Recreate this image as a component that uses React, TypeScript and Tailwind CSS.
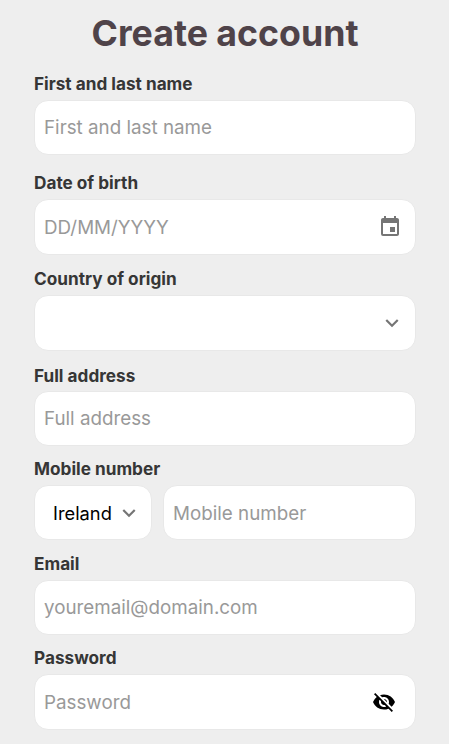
import React from 'react';
import { MdEvent, MdExpandMore, MdVisibilityOff } from 'react-icons/md';

const box = 'flex items-center bg-white rounded-[14px] border border-[#e8e8e8]';
const inputCls =
  'w-full min-w-0 bg-transparent outline-none pt-[2px] text-[18.8px] text-[#333] placeholder:text-[#999]';

function Label({ text }: { text: string }) {
  return <label className="block text-[17.2px] leading-[20px] font-bold text-[#363636]">{text}</label>;
}

export default function App() {
  return (
    <div className="w-[449px] h-[744px] overflow-hidden bg-[#eeeeee] pl-[34px] pr-[33px] font-['Inter',sans-serif]">
      <h1 className="pt-[12px] text-center text-[35.7px] leading-[42px] font-bold text-[#4f4349]">Create account</h1>

      <div className="mt-[20px]">
        <Label text="First and last name" />
        <div className={`${box} mt-[6px] h-[55px] pl-[9px] pr-[10px]`}>
          <input className={inputCls} placeholder="First and last name" />
        </div>
      </div>

      <div className="mt-[18px]">
        <Label text="Date of birth" />
        <div className={`${box} mt-[6px] h-[56px] pl-[9px] pr-[13px]`}>
          <input className={inputCls} placeholder="DD/MM/YYYY" />
          <MdEvent className="shrink-0 text-[#757575]" size={24} />
        </div>
      </div>

      <div className="mt-[14px]">
        <Label text="Country of origin" />
        <div className={`${box} mt-[6px] h-[56px] justify-end pr-[10px]`}>
          <MdExpandMore className="shrink-0 text-[#757575]" size={26} />
        </div>
      </div>

      <div className="mt-[15px]">
        <Label text="Full address" />
        <div className={`${box} mt-[5px] h-[55px] pl-[9px] pr-[10px]`}>
          <input className={inputCls} placeholder="Full address" />
        </div>
      </div>

      <div className="mt-[13px]">
        <Label text="Mobile number" />
        <div className="mt-[6px] flex gap-[11px]">
          <div className={`${box} h-[55px] w-[118px] shrink-0 pl-[18px] pr-[9px] justify-between`}>
            <span className="pt-[2px] text-[18.3px] text-black">Ireland</span>
            <MdExpandMore className="shrink-0 text-[#757575]" size={26} />
          </div>
          <div className={`${box} h-[55px] flex-1 min-w-0 pl-[9px] pr-[10px]`}>
            <input className={`${inputCls} pt-[4px]`} placeholder="Mobile number" />
          </div>
        </div>
      </div>

      <div className="mt-[14px]">
        <Label text="Email" />
        <div className={`${box} mt-[6px] h-[55px] pl-[9px] pr-[10px]`}>
          <input className={inputCls} placeholder="youremail@domain.com" />
        </div>
      </div>

      <div className="mt-[13px]">
        <Label text="Password" />
        <div className={`${box} mt-[6px] h-[56px] pl-[9px] pr-[19px]`}>
          <input className={inputCls} placeholder="Password" />
          <MdVisibilityOff className="shrink-0 text-black" size={24} />
        </div>
      </div>
    </div>
  );
}
